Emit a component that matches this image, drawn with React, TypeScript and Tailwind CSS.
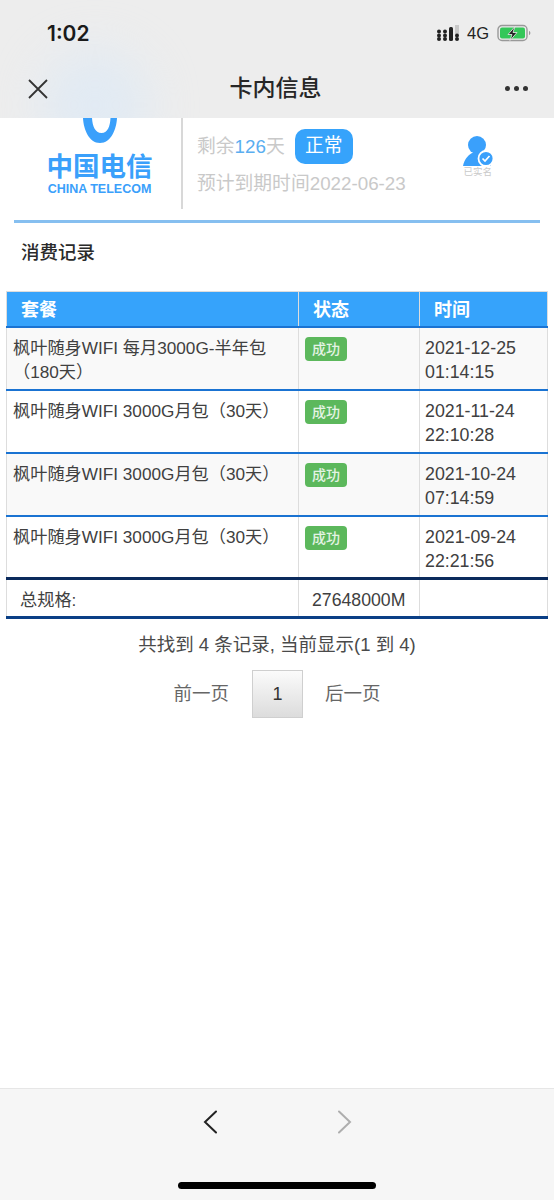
const FONT = "font-['Liberation_Sans','Noto_Sans_CJK_SC',sans-serif]";

const rows = [
  { name: '枫叶随身WIFI 每月3000G-半年包（180天）', date: '2021-12-25', time: '01:14:15' },
  { name: '枫叶随身WIFI 3000G月包（30天）', date: '2021-11-24', time: '22:10:28' },
  { name: '枫叶随身WIFI 3000G月包（30天）', date: '2021-10-24', time: '07:14:59' },
  { name: '枫叶随身WIFI 3000G月包（30天）', date: '2021-09-24', time: '22:21:56' },
];

function StatusIcons() {
  return (
    <div className="flex items-center gap-[8px]">
      <svg width="22" height="16" viewBox="0 0 22 16" fill="#222">
        <circle cx="2" cy="6.500" r="2" />
        <circle cx="2" cy="10.500" r="2" />
        <circle cx="2" cy="14" r="2" />
        <circle cx="8" cy="6.500" r="2" />
        <circle cx="8" cy="10.500" r="2" />
        <circle cx="8" cy="14" r="2" />
        <rect x="12" y="2" width="4" height="14" rx="1.500" />
        <rect x="18" y="0" width="4" height="9" fill="#c8c8c8" />
        <circle cx="20" cy="10.500" r="2" />
        <circle cx="20" cy="14" r="2" />
      </svg>
      <span className="text-[16.500px] leading-none text-[#222]">4G</span>
      <svg width="34" height="18" viewBox="0 0 34 18">
        <rect x="1" y="1.500" width="29" height="15" rx="4" fill="none" stroke="#999" strokeWidth="1.400" />
        <rect x="3" y="3.500" width="25" height="11" rx="2" fill="#34c759" />
        <path d="M32 7c1 .4 1.400 1.200 1.400 2s-.4 1.600-1.400 2z" fill="#999" />
        <path d="M18 2.500l-7 8h4l-2 6 7-8h-4z" fill="#222" stroke="#eee" strokeWidth="0.800" />
      </svg>
    </div>
  );
}

function TopBar() {
  return (
    <div className="h-[118px] shrink-0 bg-[#ededed] relative overflow-hidden">
      <div className="absolute left-[40px] top-[50px] w-[110px] h-[110px] rounded-full bg-[#d6e8fa] opacity-50 blur-xl" />
      <div className="relative h-[66px] flex items-center justify-between pl-[47px] pr-[23px]">
        <span className="font-['Inter'] text-[21px] leading-none font-semibold text-[#1a1a1a]">1:02</span>
        <StatusIcons />
      </div>
      <div className="relative h-[52px] flex items-start justify-between pl-[28px] pr-[26px]">
        <svg width="20" height="20" viewBox="0 0 20 20" className="mt-[13px]" stroke="#333" strokeWidth="1.800" fill="none">
          <path d="M1 1l18 18M19 1L1 19" />
        </svg>
        <span className="absolute left-0 right-[3px] top-[7px] text-center text-[23px] leading-[30px] font-medium text-[#262626]">卡内信息</span>
        <div className="flex gap-[4px] mt-[20px]">
          <span className="w-[5px] h-[5px] rounded-full bg-[#333]" />
          <span className="w-[5px] h-[5px] rounded-full bg-[#333]" />
          <span className="w-[5px] h-[5px] rounded-full bg-[#333]" />
        </div>
      </div>
    </div>
  );
}

function Logo() {
  return (
    <div className="w-[183px] h-[91px] shrink-0 border-r-2 border-[#d8d8d8] flex flex-col items-center overflow-hidden pl-[18px]">
      <svg width="34" height="26" viewBox="0 0 34 26" fill="#3aa0fb" className="shrink-0">
        <path d="M0 0h9c.5 8 3 15 9.500 15s8.500-7 9-15H34c-.5 11-6 25-17 25S.5 11 0 0z" />
      </svg>
      <span className="mt-[6px] text-[26.500px] leading-[34px] font-bold text-[#3aa0fb] whitespace-nowrap">中国电信</span>
      <span className="text-[12.500px] leading-[11px] font-bold text-[#3aa0fb] whitespace-nowrap">CHINA TELECOM</span>
    </div>
  );
}

function Verified() {
  return (
    <div className="flex flex-col items-center w-[40px] mt-[18px] ml-[52px]">
      <svg width="30" height="30" viewBox="0 0 30 30" className="shrink-0">
        <circle cx="14" cy="9" r="9" fill="#3aa0fb" />
        <path d="M0 30c1-6 5-11 9-13h10c4 2 9 7 9 13z" fill="#3aa0fb" />
        <circle cx="23" cy="22.500" r="7.500" fill="#3aa0fb" stroke="#fff" strokeWidth="1.800" />
        <path d="M19.500 22.500l2.500 2.500 4.500-5" fill="none" stroke="#fff" strokeWidth="1.700" />
      </svg>
      <span className="text-[9.500px] leading-[12px] text-[#c9c9c9] whitespace-nowrap">已实名</span>
    </div>
  );
}

function InfoCard() {
  return (
    <div className="flex h-[91px] shrink-0">
      <Logo />
      <div className="pl-[14px] pt-[10px]">
        <div className="flex items-center h-[36px] text-[18.800px] text-[#c9c9c9] whitespace-nowrap">
          <span className="pt-[2px]">
            剩余<span className="text-[#5aaef0]">126</span>天
          </span>
          <span className="ml-[10px] h-[35px] w-[58px] rounded-[10px] bg-[#36a3fb] text-white flex items-center justify-center">正常</span>
        </div>
        <div className="mt-[5px] text-[18.800px] leading-[30px] text-[#c9c9c9] whitespace-nowrap">预计到期时间2022-06-23</div>
      </div>
      <Verified />
    </div>
  );
}

function StatusBadge() {
  return (
    <span className="inline-flex w-[42px] h-[24px] items-center justify-center rounded-[4px] bg-[#5cb85c] text-[14px] font-medium text-[#e4f3e4]">成功</span>
  );
}

function RecordTable() {
  return (
    <div className="px-[6px] mt-[51px]">
      <table className="w-full table-fixed border-collapse text-[17.800px] leading-[24px] text-[#404040]">
        <thead>
          <tr className="h-[35px] bg-[#36a3fb] text-left text-white font-bold text-[18px]">
            <th className="w-[292px] pl-[14px] pt-[3px] border border-[#dddddd] border-b-[#1a73d2] border-b-2">套餐</th>
            <th className="w-[121px] pl-[14px] pt-[3px] border border-[#dddddd] border-b-[#1a73d2] border-b-2">状态</th>
            <th className="pl-[14px] pt-[3px] border border-[#dddddd] border-b-[#1a73d2] border-b-2">时间</th>
          </tr>
        </thead>
        <tbody>
          {rows.map((row, i) => (
            <tr key={row.date} className={i % 2 === 0 ? 'h-[63px] bg-[#f9f9f9]' : 'h-[63px] bg-white'}>
              <td className="align-top pl-[6px] pt-[8px] text-[17.200px] border border-[#dddddd] border-b-[#1a73d2] border-b-2">{row.name}</td>
              <td className="align-top pl-[6px] pt-[9px] border border-[#dddddd] border-b-[#1a73d2] border-b-2 leading-none">
                <StatusBadge />
              </td>
              <td className="align-top pl-[5px] pt-[8px] border border-[#dddddd] border-b-[#1a73d2] border-b-2">
                {row.date}
                <br />
                {row.time}
              </td>
            </tr>
          ))}
          <tr className="h-[39px] bg-white">
            <td className="pl-[13px] pt-[3px] text-[17.200px] border border-[#dddddd] border-t-[#0a2a5c] border-t-[3px] border-b-[#0a3f86] border-b-[3px]">总规格:</td>
            <td className="pl-[13px] pt-[3px] text-[17.700px] border border-[#dddddd] border-t-[#0a2a5c] border-t-[3px] border-b-[#0a3f86] border-b-[3px]">27648000M</td>
            <td className="border border-[#dddddd] border-t-[#0a2a5c] border-t-[3px] border-b-[#0a3f86] border-b-[3px]" />
          </tr>
        </tbody>
      </table>
    </div>
  );
}

function Pager() {
  return (
    <div>
      <div className="mt-[13px] text-center text-[18.500px] leading-[25px] text-[#4a4a4a]">共找到 4 条记录, 当前显示(1 到 4)</div>
      <div className="mt-[13px] flex justify-center items-center">
        <span className="text-[18.500px] text-[#666] mr-[23px]">前一页</span>
        <span className="w-[51px] h-[48px] flex items-center justify-center border border-[#cfcfcf] bg-gradient-to-b from-[#fbfbfb] to-[#dcdcdc] text-[18px] text-[#333]">1</span>
        <span className="text-[18.500px] text-[#666] ml-[22px]">后一页</span>
      </div>
    </div>
  );
}

function BottomBar() {
  return (
    <div className="h-[112px] shrink-0 bg-[#f6f6f6] border-t border-[#e6e6e6] flex flex-col items-center">
      <div className="flex gap-[121px] mt-[21px]">
        <svg width="14" height="24" viewBox="0 0 14 24" fill="none" stroke="#222" strokeWidth="2" strokeLinecap="round">
          <path d="M13 1.500L2 12l11 10.500" />
        </svg>
        <svg width="14" height="24" viewBox="0 0 14 24" fill="none" stroke="#aeaeae" strokeWidth="2" strokeLinecap="round">
          <path d="M1 1.500L12 12 1 22.500" />
        </svg>
      </div>
      <div className="mt-[48px] w-[198px] h-[7px] rounded-full bg-black" />
    </div>
  );
}

export default function App() {
  return (
    <div className={`${FONT} w-[554px] h-[1200px] bg-white flex flex-col overflow-hidden`}>
      <TopBar />
      <div className="flex-1">
        <InfoCard />
        <div className="mx-[14px] mt-[11px] h-[3px] bg-[#86bff0]" />
        <div className="pl-[21px] mt-[17px] h-0 text-[18.500px] leading-[26px] font-medium text-[#2b2b2b]">消费记录</div>
        <RecordTable />
        <Pager />
      </div>
      <BottomBar />
    </div>
  );
}
